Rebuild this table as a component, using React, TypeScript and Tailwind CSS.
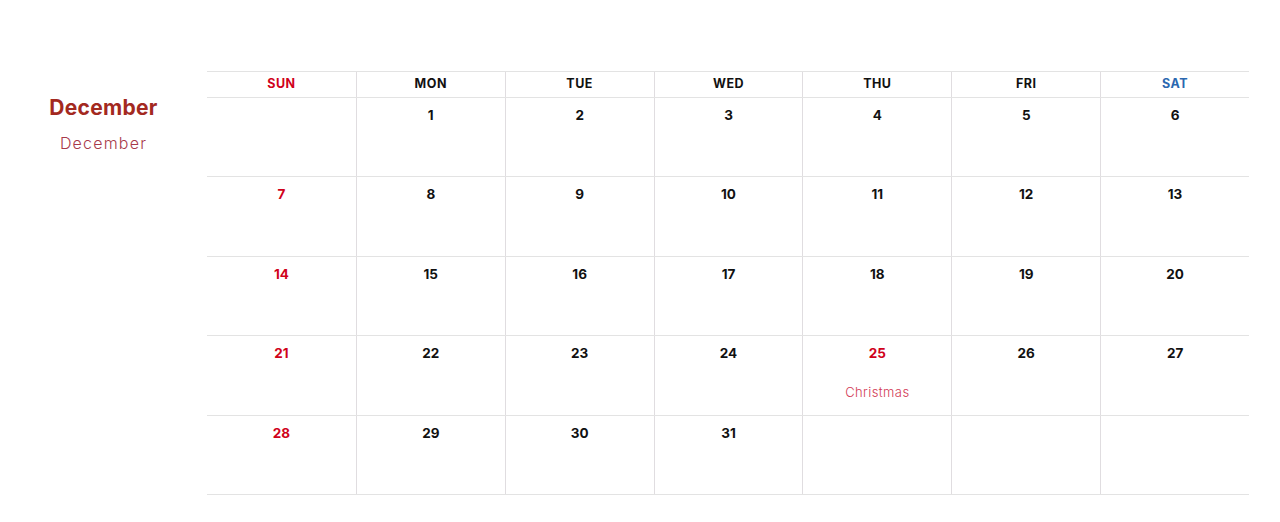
import React from "react";

const days = ["SUN", "MON", "TUE", "WED", "THU", "FRI", "SAT"];

const weeks: (number | null)[][] = [
  [null, 1, 2, 3, 4, 5, 6],
  [7, 8, 9, 10, 11, 12, 13],
  [14, 15, 16, 17, 18, 19, 20],
  [21, 22, 23, 24, 25, 26, 27],
  [28, 29, 30, 31, null, null, null],
];

export default function App() {
  return (
    <div
      className="w-[1280px] h-[522px] bg-white flex pt-[71px]"
      style={{ fontFamily: "Inter, 'Open Sans', sans-serif" }}
    >
      <div className="w-[207px] flex flex-col items-center pt-[24px]">
        <div className="text-[21px] leading-[26px] font-bold text-[#a3291f] tracking-[0.3px]">
          December
        </div>
        <div className="mt-[12px] text-[16px] leading-[20px] font-light text-[#a8394a] tracking-[1.2px]">
          December
        </div>
      </div>
      <div className="w-[1042px] flex flex-col">
        <div className="grid grid-cols-7 border-t border-b border-[#e3e3e3] h-[27px]">
          {days.map((d, i) => (
            <div
              key={d}
              className={
                "flex items-center justify-center text-[12.5px] font-bold tracking-[0.5px] " +
                (i > 0 ? "border-l border-[#e0dde0] " : "") +
                (i === 0 ? "text-[#d0021b]" : i === 6 ? "text-[#2b68b0]" : "text-[#111111]")
              }
            >
              {d}
            </div>
          ))}
        </div>
        {weeks.map((w, wi) => (
          <div key={wi} className="grid grid-cols-7 border-b border-[#e3e3e3] h-[79.4px]">
            {w.map((n, i) => (
              <div
                key={i}
                className={
                  "flex flex-col items-center pt-[9px] " +
                  (i > 0 ? "border-l border-[#e0dde0]" : "")
                }
              >
                {n !== null && (
                  <div
                    className={
                      "text-[13.5px] leading-[16px] font-bold " +
                      (i === 0 || n === 25 ? "text-[#d0021b]" : "text-[#111111]")
                    }
                  >
                    {n}
                  </div>
                )}
                {n === 25 && (
                  <div className="mt-[23px] text-[13px] leading-[16px] font-light text-[#d23a55] tracking-[0.4px]">
                    Christmas
                  </div>
                )}
              </div>
            ))}
          </div>
        ))}
      </div>
    </div>
  );
}
